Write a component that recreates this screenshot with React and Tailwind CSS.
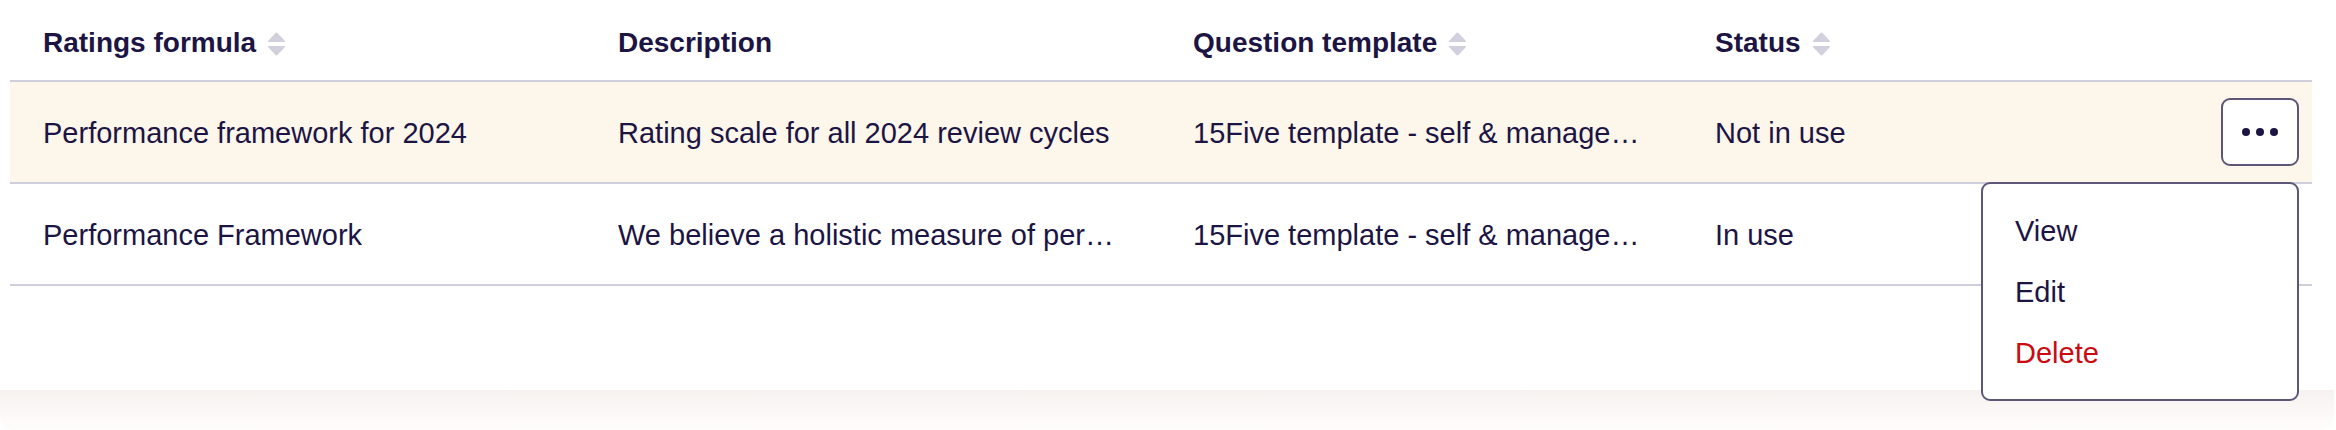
import React from "react";

function SortIcon() {
  return (
    <svg width="19" height="24" viewBox="0 0 19 24" className="ml-[11px] mt-[2px] shrink-0">
      <path d="M8.3 1.2 Q9.5 -0.2 10.7 1.2 L18 9 Q18.6 10 17.4 10 L1.6 10 Q0.4 10 1 9 Z" fill="#d2d0dc" />
      <path d="M8.3 22.8 Q9.5 24.2 10.7 22.8 L18 15 Q18.6 14 17.4 14 L1.6 14 Q0.4 14 1 15 Z" fill="#d2d0dc" />
    </svg>
  );
}

const cols = "grid grid-cols-[575px_575px_522px_1fr]";

function HeaderCell({ label, sortable }) {
  return (
    <div className="flex items-center pl-[33px] pt-[6px]">
      <span className="text-[28px] font-bold leading-[1.3] text-[#1c1544]">{label}</span>
      {sortable && <SortIcon />}
    </div>
  );
}

function Cell({ children }) {
  return (
    <div className="flex items-center pl-[33px] pr-[30px] pt-[3px] min-w-0">
      <span className="block truncate text-[29px] leading-[1.3] text-[#1c1544]">{children}</span>
    </div>
  );
}

export default function App() {
  return (
    <div
      className="w-[2336px] h-[430px] bg-white flex flex-col overflow-hidden"
      style={{ fontFamily: '"Liberation Sans", Arial, sans-serif' }}
    >
      <div className="ml-[10px] mr-[24px]">
        <div className={`${cols} h-[82px] border-b-2 border-[#d0cedb]`}>
          <HeaderCell label="Ratings formula" sortable />
          <HeaderCell label="Description" />
          <HeaderCell label="Question template" sortable />
          <HeaderCell label="Status" sortable />
        </div>

        <div className={`${cols} h-[102px] border-b-2 border-[#d0cedb] bg-[#fdf6eb]`}>
          <Cell>Performance framework for 2024</Cell>
          <Cell>Rating scale for all 2024 review cycles</Cell>
          <Cell>15Five template - self &amp; manage…</Cell>
          <div className="flex items-center justify-between pl-[33px] pr-[13px]">
            <span className="pt-[3px] text-[29px] leading-[1.3] text-[#1c1544]">Not in use</span>
            <div className="relative">
              <button className="w-[78px] h-[68px] rounded-[9px] border-2 border-[#5d5677] bg-white flex items-center justify-center gap-[6px]">
                <span className="w-[8px] h-[8px] rounded-full bg-[#1c1544]" />
                <span className="w-[8px] h-[8px] rounded-full bg-[#1c1544]" />
                <span className="w-[8px] h-[8px] rounded-full bg-[#1c1544]" />
              </button>
              <div className="absolute right-0 top-[84px] z-10 w-[318px] rounded-[9px] border-2 border-[#5d5677] bg-white py-[16px]">
                <div className="h-[61px] flex items-center px-[32px] pt-[3px] text-[29px] leading-[1.3] text-[#1c1544]">View</div>
                <div className="h-[61px] flex items-center px-[32px] pt-[3px] text-[29px] leading-[1.3] text-[#1c1544]">Edit</div>
                <div className="h-[61px] flex items-center px-[32px] pt-[3px] text-[29px] leading-[1.3] text-[#cc0a12]">Delete</div>
              </div>
            </div>
          </div>
        </div>

        <div className={`${cols} h-[102px] border-b-2 border-[#d0cedb]`}>
          <Cell>Performance Framework</Cell>
          <Cell>We believe a holistic measure of per…</Cell>
          <Cell>15Five template - self &amp; manage…</Cell>
          <div className="flex items-center pl-[33px] pt-[3px]">
            <span className="text-[29px] leading-[1.3] text-[#1c1544]">In use</span>
          </div>
        </div>
      </div>

      <div className="flex-1" />
      <div className="h-[40px] mr-[2px] rounded-b-[14px] bg-gradient-to-b from-[#f7f2f0] to-[#fffdfc]" />
    </div>
  );
}
